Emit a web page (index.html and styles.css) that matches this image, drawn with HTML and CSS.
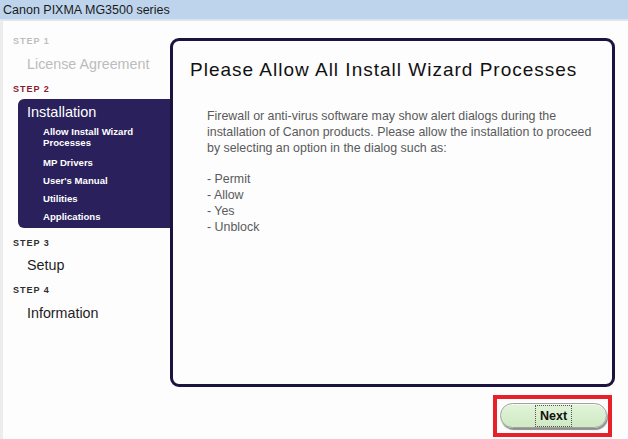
FILE: index.html
```html
<html>
<head>
  <title>Canon PIXMA MG3500 series</title>
  <link rel="stylesheet" href="styles.css">
</head>
<body>
  <div class="titlebar">Canon PIXMA MG3500 series</div>

  <div class="content">
    <div class="sidebar">
      <div class="step_label done">STEP 1</div>
      <div class="step_item done">License Agreement</div>

      <div class="step_label current">STEP 2</div>
      <div class="nav">
        <div class="nav_title">Installation</div>
        <ul class="nav_list">
          <li class="two_line">Allow Install Wizard<br />Processes</li>
          <li>MP Drivers</li>
          <li>User's Manual</li>
          <li>Utilities</li>
          <li>Applications</li>
        </ul>
      </div>

      <div class="step_label">STEP 3</div>
      <div class="step_item">Setup</div>

      <div class="step_label">STEP 4</div>
      <div class="step_item">Information</div>
    </div>

    <div class="right">
      <div class="panel">
        <h1 class="panel_title">Please Allow All Install Wizard Processes</h1>
        <div class="panel_text">
          <p>Firewall or anti-virus software may show alert dialogs during the<br />
          installation of Canon products. Please allow the installation to proceed<br />
          by selecting an option in the dialog such as:</p>
          <p>- Permit<br />- Allow<br />- Yes<br />- Unblock</p>
        </div>
      </div>

      <div class="footer">
        <div class="highlight">
          <button class="btn_next"><span>Next</span></button>
        </div>
      </div>
    </div>
  </div>
</body>
</html>
```

FILE: styles.css
```css
body {
    margin: 0px;
    padding: 0px;
    width: 628px;
    height: 439px;
    overflow: hidden;
    background-color: #fdfdfe;
    font-family: "Liberation Sans", Arial, sans-serif;
}

.titlebar {
    height: 20px;
    line-height: 20px;
    padding-left: 3px;
    font-size: 12.5px;
    color: #1b1b1b;
    background-color: #bed4ec;
    border-bottom: 1px solid #d6e3f2;
    box-sizing: border-box;
}

.content {
    display: flex;
    height: 419px;
    border-top: 1px solid #e6e6e6;
    border-left: 3px solid #ececec;
    box-sizing: border-box;
}

/* left column */
.sidebar {
    width: 167px;
    flex-shrink: 0;
}

.step_label {
    font-size: 9px;
    font-weight: bold;
    letter-spacing: 1px;
    line-height: 12px;
    height: 12px;
    padding-left: 10px;
    margin-top: 9px;
    color: #2e2e2e;
}

.step_label:first-child {
    margin-top: 14px;
}

.step_label.done {
    color: #bdbdbd;
}

.step_label.current {
    color: #8a1a2e;
}

.step_item {
    font-size: 14.3px;
    line-height: 20px;
    padding-left: 24px;
    margin-top: 6.5px;
    color: #1e1e1e;
}

.step_item.done {
    color: #bcbcbc;
}

.nav {
    margin: 4px 0px 8px 15px;
    padding: 3px 0px 6px 9px;
    background-color: #2a205b;
    border-radius: 6px 0px 0px 6px;
    color: #fff;
}

.nav_title {
    font-size: 14.5px;
    line-height: 20px;
}

.nav_list {
    list-style: none;
    margin: 0px;
    padding: 0px 0px 0px 16px;
    font-size: 9.6px;
    font-weight: bold;
    line-height: 11px;
}

.nav_list li {
    margin-top: 7px;
}

.nav_list li.two_line {
    margin-top: 4px;
    margin-bottom: 9px;
}

/* right column */
.right {
    width: 445px;
    flex-shrink: 0;
}

.panel {
    margin-top: 17px;
    height: 349px;
    box-sizing: border-box;
    border: 3px solid #1b1340;
    border-radius: 9px;
    background-color: #fdfdfe;
    padding: 17px 0px 0px 17px;
}

.panel_title {
    margin: 0px;
    font-size: 19px;
    font-weight: normal;
    letter-spacing: 1px;
    line-height: 24px;
    color: #111;
}

.panel_text {
    margin-top: 27px;
    padding-left: 17px;
    font-size: 12.4px;
    line-height: 15.8px;
    color: #5a5a5a;
}

.panel_text p {
    margin: 0px 0px 15.8px 0px;
}

.footer {
    display: flex;
    justify-content: flex-end;
    padding-right: 3px;
    margin-top: 8px;
}

.highlight {
    width: 119px;
    height: 42px;
    box-sizing: border-box;
    border: 4px solid #e8202a;
    padding: 4px 0px 0px 3px;
}

.btn_next {
    width: 107px;
    height: 25px;
    padding: 0px;
    border: 1px solid #a2a2a2;
    border-radius: 13px;
    background: linear-gradient(#e2f3da, #cfeac3);
    box-shadow: 1px 2px 1px #8d8d8d, inset 0px 1px 0px #f4fbf0;
    font-family: "Liberation Sans", Arial, sans-serif;
    font-size: 12.5px;
    font-weight: bold;
    color: #111;
}

.btn_next span {
    display: inline-block;
    padding: 3px 4px 3px 4px;
    border: 1px dotted #555;
    line-height: 14px;
}
```
